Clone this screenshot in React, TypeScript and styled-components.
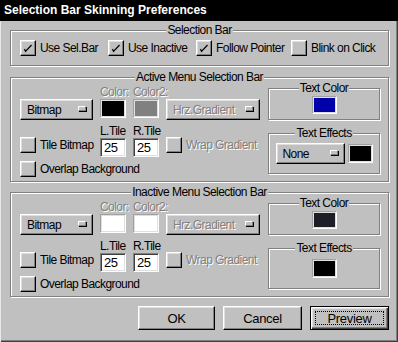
import React from 'react';
import styled, { createGlobalStyle, css } from 'styled-components';

const FONT = `"Liberation Sans", Arial, sans-serif`;

const Global = createGlobalStyle`
  html, body { margin: 0; padding: 0; background: #c0c0c0; }
  * { box-sizing: border-box; }
`;

const raised = css`
  border: 1px solid;
  border-color: #fff #000 #000 #fff;
  box-shadow: inset -1px -1px #808080, inset 1px 1px #dfdfdf;
  background: #c0c0c0;
`;

const disabledText = css`
  color: #808080;
  text-shadow: 1px 1px #fff;
`;

const Window = styled.div`
  width: 398px;
  height: 342px;
  background: #c0c0c0;
  display: flex;
  flex-direction: column;
  font-family: ${FONT};
  font-size: 12px;
  letter-spacing: -0.55px;
  color: #000;
  overflow: hidden;
`;

const TitleBar = styled.div`
  flex: none;
  height: 21px;
  background: #000;
  color: #fff;
  font: bold 12px "Liberation Sans", Arial, sans-serif;
  letter-spacing: 0;
  line-height: 21px;
  padding-left: 4px;
  white-space: nowrap;
`;

const Body = styled.div`
  flex: 1;
  display: flex;
  flex-direction: column;
  padding: 9px 9px 0 10px;
  box-shadow: inset 1px 0 #e8e8e8, inset -1px -1px #404040, inset -2px -2px #808080;
`;

const Group = styled.div<{ $mt?: number }>`
  display: flex;
  flex-direction: column;
  border: 1px solid #808080;
  box-shadow: inset 1px 1px #fff, 1px 1px #fff;
  margin-top: ${(p) => p.$mt ?? 0}px;
`;

const Legend = styled.div`
  align-self: center;
  background: #c0c0c0;
  padding: 0 1px;
  height: 13px;
  line-height: 13px;
  margin: -7px 0 -6px;
  white-space: nowrap;
  position: relative;
`;

const TopRow = styled.div`
  display: grid;
  grid-template-columns: 88px 88px 95px 1fr;
  padding: 9px 0 9px 9px;
`;

const CheckItem = styled.label<{ $disabled?: boolean; $mt?: number; $span?: boolean }>`
  display: flex;
  align-items: center;
  gap: 4px;
  height: 16px;
  white-space: nowrap;
  margin-top: ${(p) => p.$mt ?? 0}px;
  grid-column: ${(p) => (p.$span ? '1 / -1' : 'auto')};
  ${(p) => p.$disabled && disabledText}
`;

const Box = styled.span`
  ${raised}
  flex: none;
  width: 16px;
  height: 16px;
  display: inline-flex;
  align-items: center;
  justify-content: center;
  text-shadow: none;
`;

const Check = ({
  label,
  checked,
  disabled,
  mt,
  span,
}: {
  label: string;
  checked?: boolean;
  disabled?: boolean;
  mt?: number;
  span?: boolean;
}) => (
  <CheckItem $disabled={disabled} $mt={mt} $span={span}>
    <Box>
      {checked && (
        <svg width="14" height="14" viewBox="0 0 14 14">
          <path d="M3.5 8 L4.5 10.5 L10.5 4" stroke="#000" strokeWidth="1.2" fill="none" />
        </svg>
      )}
    </Box>
    {label}
  </CheckItem>
);

const Drop = styled.div<{ $w: number; $disabled?: boolean; $mt?: number }>`
  ${raised}
  width: ${(p) => p.$w}px;
  height: 21px;
  flex: none;
  display: flex;
  align-items: center;
  justify-content: space-between;
  padding: 0 6px 0 6px;
  margin-top: ${(p) => p.$mt ?? 0}px;
  white-space: nowrap;
  ${(p) => p.$disabled && disabledText}
`;

const DropMark = styled.span`
  width: 8px;
  height: 5px;
  border: 1px solid;
  border-color: #fff #808080 #808080 #fff;
  background: #c0c0c0;
  box-shadow: 1px 1px #000;
  margin-bottom: 2px;
`;

const Dropdown = ({ text, w, disabled, mt }: { text: string; w: number; disabled?: boolean; mt?: number }) => (
  <Drop $w={w} $disabled={disabled} $mt={mt}>
    <span>{text}</span>
    <DropMark />
  </Drop>
);

const FieldCell = styled.div`
  display: flex;
  flex-direction: column;
`;

const SmallLabel = styled.span<{ $disabled?: boolean }>`
  height: 13px;
  line-height: 13px;
  white-space: nowrap;
  ${(p) => p.$disabled && disabledText}
`;

const Swatch = styled.div<{ $c: string; $w: number; $h: number }>`
  flex: none;
  width: ${(p) => p.$w}px;
  height: ${(p) => p.$h}px;
  background: ${(p) => p.$c};
  border: 1px solid;
  border-color: #a0a0a0 #fff #fff #a0a0a0;
  box-shadow: inset 1px 1px #dfdfdf, inset -1px -1px #dfdfdf;
`;

const NumField = styled.div`
  width: 26px;
  height: 19px;
  background: #fff;
  border: 1px solid;
  border-color: #808080 #fff #fff #808080;
  box-shadow: inset 1px 1px #404040, inset -1px -1px #dfdfdf;
  padding: 0 0 0 3px;
  line-height: 17px;
  font-size: 13px;
`;

const SectionRow = styled.div`
  display: flex;
  align-items: flex-start;
  gap: 8px;
  padding: 8px 7px 4px 9px;
`;

const LeftGrid = styled.div`
  display: grid;
  grid-template-columns: 73px 26px 26px 94px;
  grid-template-rows: 39px 36px 16px;
  column-gap: 7px;
  align-items: start;
`;

const RightCol = styled.div`
  width: 112px;
  display: flex;
  flex-direction: column;
  gap: 13px;
  margin-top: 2px;
`;

const SubBody = styled.div<{ $pt: number; $pb: number }>`
  display: flex;
  justify-content: center;
  align-items: center;
  gap: 3px;
  padding: ${(p) => p.$pt}px 0 ${(p) => p.$pb}px;
`;

const ButtonRow = styled.div`
  display: flex;
  justify-content: flex-end;
  gap: 8px;
  margin-top: 9px;
`;

const PushButton = styled.button<{ $w: number; $default?: boolean }>`
  ${raised}
  width: ${(p) => p.$w}px;
  height: 24px;
  padding: 0;
  font-family: ${FONT};
  font-size: 13px;
  letter-spacing: -0.3px;
  color: #000;
  display: flex;
  align-items: center;
  justify-content: center;
  ${(p) =>
    p.$default &&
    css`
      border: 1px solid #000;
      box-shadow: inset 1px 1px #fff, inset -1px -1px #404040, inset -2px -2px #808080, inset 2px 2px #dfdfdf;
    `}
`;

const FocusRect = styled.span`
  display: flex;
  align-items: center;
  justify-content: center;
  width: calc(100% - 8px);
  height: calc(100% - 8px);
  border: 1px dotted #000;
`;

const MenuSection = ({
  c1,
  c2,
  text,
  active,
}: {
  c1: string;
  c2: string;
  text: string;
  active?: boolean;
}) => (
  <SectionRow>
    <LeftGrid>
      <Dropdown text="Bitmap" w={73} mt={13} />
      <FieldCell>
        <SmallLabel $disabled>Color:</SmallLabel>
        <Swatch $c={c1} $w={26} $h={19} />
      </FieldCell>
      <FieldCell>
        <SmallLabel $disabled>Color2:</SmallLabel>
        <Swatch $c={c2} $w={26} $h={19} />
      </FieldCell>
      <Dropdown text="Hrz.Gradient" w={94} mt={13} disabled />
      <Check label="Tile Bitmap" mt={12} />
      <FieldCell>
        <SmallLabel>L.Tile</SmallLabel>
        <NumField>25</NumField>
      </FieldCell>
      <FieldCell>
        <SmallLabel>R.Tile</SmallLabel>
        <NumField>25</NumField>
      </FieldCell>
      <Check label="Wrap Gradient" mt={12} disabled />
      <Check label="Overlap Background" span />
    </LeftGrid>
    <RightCol>
      <Group>
        <Legend>Text Color</Legend>
        <SubBody $pt={7} $pb={5}>
          <Swatch $c={text} $w={25} $h={18} />
        </SubBody>
      </Group>
      <Group>
        <Legend>Text Effects</Legend>
        {active ? (
          <SubBody $pt={9} $pb={9}>
            <Dropdown text="None" w={69} />
            <Swatch $c="#000" $w={25} $h={19} />
          </SubBody>
        ) : (
          <SubBody $pt={10} $pb={10}>
            <Swatch $c="#000" $w={25} $h={19} />
          </SubBody>
        )}
      </Group>
    </RightCol>
  </SectionRow>
);

export default function App() {
  return (
    <>
      <Global />
      <Window>
        <TitleBar>Selection Bar Skinning Preferences</TitleBar>
        <Body>
          <Group>
            <Legend>Selection Bar</Legend>
            <TopRow>
              <Check label="Use Sel.Bar" checked />
              <Check label="Use Inactive" checked />
              <Check label="Follow Pointer" checked />
              <Check label="Blink on Click" />
            </TopRow>
          </Group>
          <Group $mt={11}>
            <Legend>Active Menu Selection Bar</Legend>
            <MenuSection c1="#000" c2="#808080" text="#0000a8" active />
          </Group>
          <Group $mt={10}>
            <Legend>Inactive Menu Selection Bar</Legend>
            <MenuSection c1="#fff" c2="#fff" text="#1e1e26" />
          </Group>
          <ButtonRow>
            <PushButton $w={77}>OK</PushButton>
            <PushButton $w={79}>Cancel</PushButton>
            <PushButton $w={79} $default>
              <FocusRect>Preview</FocusRect>
            </PushButton>
          </ButtonRow>
        </Body>
      </Window>
    </>
  );
}
